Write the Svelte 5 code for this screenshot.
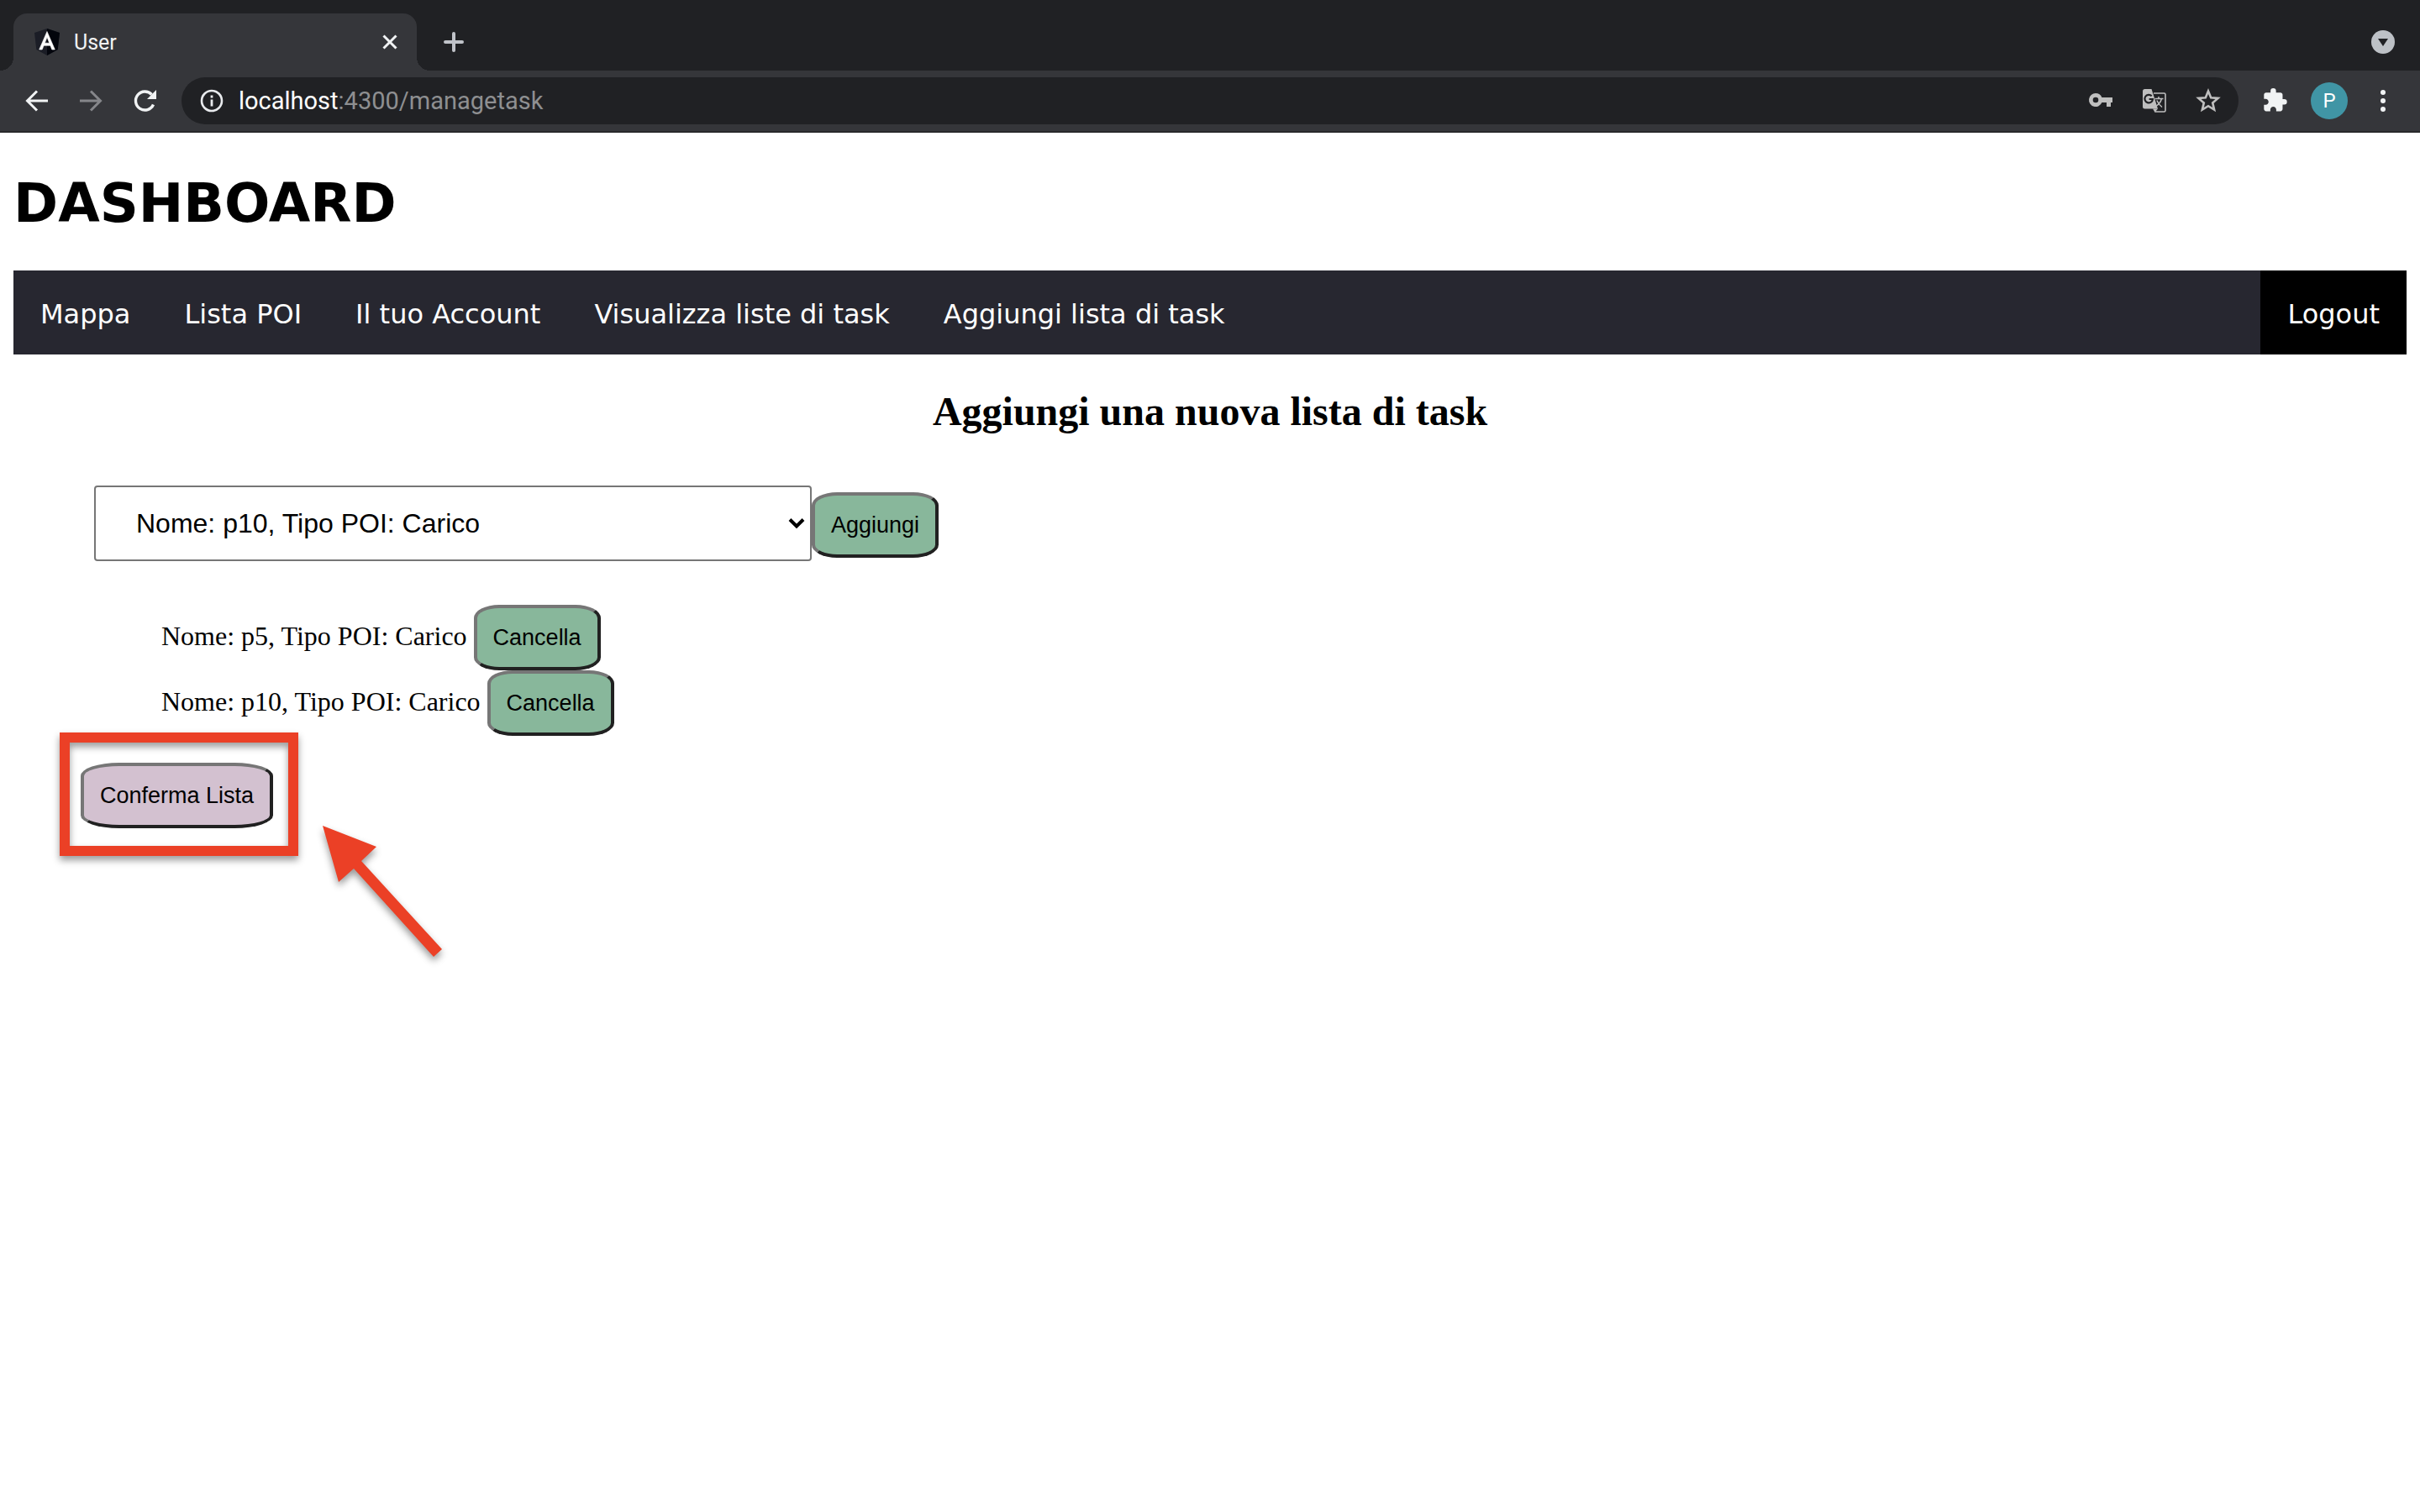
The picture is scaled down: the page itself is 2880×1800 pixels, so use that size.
<script>
  const links = ['Mappa', 'Lista POI', 'Il tuo Account', 'Visualizza liste di task', 'Aggiungi lista di task'];
  const options = ['Nome: p10, Tipo POI: Carico', 'Nome: p5, Tipo POI: Carico'];
  let selected = $state(options[0]);
  let tasks = $state(['Nome: p5, Tipo POI: Carico', 'Nome: p10, Tipo POI: Carico']);

  function add() {
    tasks.push(selected);
  }

  function remove(index) {
    tasks.splice(index, 1);
  }
</script>

<div class="window">
<div class="browser">
  <div class="tabstrip">
    <div class="tab">
      <svg class="favicon" viewBox="0 0 32 32" aria-hidden="true">
        <path d="M16 0 31 5 28.700 25 16 32 3.300 25 1 5Z" fill="#1b1d26" />
        <path d="M16 0 31 5 28.700 25 16 32Z" fill="#03050c" />
        <path d="M16 3.500 6.700 25H10.200L12.100 20.200H19.900L21.800 25H25.300ZM16 10.300 18.700 17.200H13.300Z" fill="#fff" fill-rule="evenodd" stroke="#fff" stroke-width="0.600" />
      </svg>
      <span class="tab-title">User</span>
      <button class="icon-button" aria-label="Chiudi scheda">
        <svg width="18" height="18" viewBox="0 0 18 18"><path d="M1.500 1.500 16.500 16.500M16.500 1.500 1.500 16.500" stroke="#f1f3f4" stroke-width="3" /></svg>
      </button>
    </div>
    <button class="icon-button" aria-label="Nuova scheda">
      <svg width="24" height="24" viewBox="0 0 24 24"><path d="M12 2V22M2 12H22" stroke="#c0c3c9" stroke-width="4" stroke-linecap="round" /></svg>
    </button>
    <button class="icon-button tab-search" aria-label="Cerca schede">
      <svg width="28" height="28" viewBox="0 0 28 28"><circle cx="14" cy="14" r="14" fill="#bdc1c6" /><path d="M8 10H20L14 19Z" fill="#202124" /></svg>
    </button>
  </div>

  <div class="toolbar">
    <div class="history">
      <button class="icon-button" aria-label="Indietro">
        <svg width="28" height="28" viewBox="0 0 28 28"><path d="M27 14H3M14 2.500 2.500 14 14 25.500" fill="none" stroke="#f1f3f4" stroke-width="3" /></svg>
      </button>
      <button class="icon-button" aria-label="Avanti">
        <svg width="28" height="28" viewBox="0 0 28 28"><path d="M1 14H25M14 2.500 25.500 14 14 25.500" fill="none" stroke="#85868a" stroke-width="3" /></svg>
      </button>
      <button class="icon-button" aria-label="Ricarica">
        <svg width="28" height="28" viewBox="0 0 28 28"><path d="M24.500 18.500A11 11 0 1 1 22.500 6.500" fill="none" stroke="#f1f3f4" stroke-width="3.400" /><path d="M28 1V12H17Z" fill="#f1f3f4" /></svg>
      </button>
    </div>
    <div class="omnibox">
      <svg width="28" height="28" viewBox="0 0 28 28" aria-hidden="true"><circle cx="14" cy="14" r="12" fill="none" stroke="#e8eaed" stroke-width="2.600" /><path d="M14 7.500V10.500M14 12.500V20.500" stroke="#e8eaed" stroke-width="2.800" /></svg>
      <span class="url">localhost<span class="path">:4300/managetask</span></span>
      <div class="page-actions">
        <button class="icon-button" aria-label="Gestisci password">
          <svg width="30" height="30" viewBox="0 0 30 30"><path d="M9 6A8 8 0 1 0 16.400 17H22V22H27V17H29V11H16.400A8 8 0 0 0 9 6ZM9 10.700A3.300 3.300 0 1 1 9 17.300A3.300 3.300 0 1 1 9 10.700Z" fill="#bfbfbf" fill-rule="evenodd" /></svg>
        </button>
        <button class="icon-button" aria-label="Traduci questa pagina">
          <svg width="30" height="30" viewBox="0 0 30 30">
            <path d="M14 6H26.500Q28 6 28 7.500V26.500Q28 28 26.500 28H15.500" fill="none" stroke="#bfbfbf" stroke-width="1.600" />
            <path d="M3.500 1H11.500L19 24.500H3.500Q1 24.500 1 22V3.500Q1 1 3.500 1Z" fill="#bfbfbf" />
            <path d="M13 24.500H19L15.500 28.800Z" fill="#bfbfbf" />
            <path d="M11.700 9.300A4.800 4.800 0 1 0 13 13H8.600" fill="none" stroke="#202124" stroke-width="2.200" />
            <path d="M15.500 12.500H25.500M20 10V12.500M23.500 12.500Q22 18 16.800 21.500M17.800 14.500Q20 19.500 24 22.500" fill="none" stroke="#bfbfbf" stroke-width="1.500" />
          </svg>
        </button>
        <button class="icon-button" aria-label="Aggiungi ai preferiti">
          <svg width="30" height="30" viewBox="0 0 30 30"><path d="M15 3.500 18.200 11.200 26.600 11.900 20.200 17.400 22.100 25.500 15 21.200 7.900 25.500 9.800 17.400 3.400 11.900 11.800 11.200Z" fill="none" stroke="#bfbfbf" stroke-width="2.600" /></svg>
        </button>
      </div>
    </div>
    <button class="icon-button" aria-label="Estensioni">
      <svg width="30" height="30" viewBox="1 1 23 23"><path d="M20.500 11H19V7c0-1.100-.9-2-2-2h-4V3.500a2.500 2.500 0 0 0-5 0V5H4c-1.100 0-1.990.9-1.990 2v3.800H3.500c1.490 0 2.700 1.210 2.700 2.700s-1.210 2.700-2.700 2.700H2V20c0 1.100.9 2 2 2h3.800v-1.500c0-1.490 1.210-2.700 2.700-2.700s2.700 1.210 2.700 2.700V22H17c1.100 0 2-.9 2-2v-4h1.500a2.500 2.500 0 0 0 0-5z" fill="#f1f3f4" /></svg>
    </button>
    <button class="avatar" aria-label="Profilo P">P</button>
    <button class="icon-button menu" aria-label="Menu">
      <svg width="6" height="28" viewBox="0 0 6 28"><circle cx="3" cy="4" r="3" fill="#f1f3f4" /><circle cx="3" cy="14" r="3" fill="#f1f3f4" /><circle cx="3" cy="24" r="3" fill="#f1f3f4" /></svg>
    </button>
  </div>
</div>

<main>
  <h1>DASHBOARD</h1>
  <nav>
    {#each links as link}
      <a href="#top">{link}</a>
    {/each}
    <a class="logout" href="#logout">Logout</a>
  </nav>

  <h2>Aggiungi una nuova lista di task</h2>

  <div class="picker">
    <div class="select-box">
      <select aria-label="POI" bind:value={selected}>
        {#each options as option}
          <option>{option}</option>
        {/each}
      </select>
      <svg class="chevron" width="20" height="14" viewBox="0 0 20 14" aria-hidden="true"><path d="M2 2.500 10 10.500 18 2.500" fill="none" stroke="#000" stroke-width="4" /></svg>
    </div>
    <button class="action" onclick={add}>Aggiungi</button>
  </div>

  <ul>
    {#each tasks as task, i}
      <li><span>{task}</span><button class="action" onclick={() => remove(i)}>Cancella</button></li>
    {/each}
  </ul>

  <div class="confirm">
    <button class="action primary">Conferma Lista</button>
    <div class="highlight"></div>
    <svg class="arrow" width="150" height="164" viewBox="0 0 150 164" aria-hidden="true"><path d="M4 3 68 28 50 45 146 150 136 159 41 54 23 70Z" fill="#eb4026" /></svg>
  </div>
</main>
</div>

<style>
  :global(body) {
    background: #fff;
  }

  .window {
    display: flex;
    flex-direction: column;
    min-height: 100vh;
  }

  button {
    margin: 0;
    cursor: pointer;
  }

  .browser {
    font-family: Roboto, 'Liberation Sans', sans-serif;
    background: #35363a;
    border-bottom: 2px solid #28292b;
  }

  .tabstrip {
    display: flex;
    align-items: center;
    height: 84px;
    box-sizing: border-box;
    padding: 16px 30px 0 16px;
    background: #202124;
  }

  .tab {
    position: relative;
    display: flex;
    align-items: center;
    width: 480px;
    height: 68px;
    box-sizing: border-box;
    padding: 0 23px 0 24px;
    margin-right: 32px;
    border-radius: 16px 16px 0 0;
    background: #35363a;
  }

  .tab::before,
  .tab::after {
    content: '';
    position: absolute;
    bottom: 0;
    width: 16px;
    height: 16px;
  }

  .tab::before {
    right: 100%;
    background: radial-gradient(circle at 0 0, #202124 16px, #35363a 16px);
  }

  .tab::after {
    left: 100%;
    background: radial-gradient(circle at 100% 0, #202124 16px, #35363a 16px);
  }

  .favicon {
    width: 32px;
    height: 32px;
  }

  .tab-title {
    flex: 1;
    margin-left: 16px;
    font-size: 25px;
    color: #f1f3f4;
  }

  .icon-button {
    display: flex;
    padding: 0;
    border: 0;
    background: none;
  }

  .tab-search {
    margin-left: auto;
  }

  .toolbar {
    display: flex;
    align-items: center;
    height: 72px;
    box-sizing: border-box;
    padding: 0 41px 0 30px;
  }

  .history {
    display: flex;
    gap: 36px;
    margin-right: 30px;
  }

  .omnibox {
    flex: 1;
    display: flex;
    align-items: center;
    height: 56px;
    box-sizing: border-box;
    margin-right: 29px;
    padding: 0 21px 0 22px;
    border-radius: 28px;
    background: #202124;
  }

  .url {
    flex: 1;
    margin-left: 18px;
    font-size: 29px;
    color: #fff;
  }

  .path {
    color: #8e8f91;
  }

  .page-actions {
    display: flex;
    gap: 34px;
  }

  .avatar {
    width: 44px;
    height: 44px;
    margin: 0 39px 0 27px;
    padding: 0;
    border: 0;
    border-radius: 50%;
    background: #4095a5;
    color: #fff;
    font: 24px Roboto, sans-serif;
  }

  main {
    flex: 1;
    padding: 45px 16px 16px;
    font-family: 'Liberation Serif', 'Times New Roman', serif;
    color: #000;
  }

  h1 {
    margin: 0 0 41px;
    font: bold 64px/78px 'DejaVu Sans', Verdana, sans-serif;
  }

  nav {
    display: flex;
    background: #272730;
  }

  nav a {
    padding: 30px 32px 26px;
    font: 32px/44px 'DejaVu Sans', Verdana, sans-serif;
    color: #fff;
    text-decoration: none;
  }

  .logout {
    margin-left: auto;
    background: #000;
  }

  h2 {
    margin: 40px 0 60px;
    font-size: 48px;
    line-height: 56px;
    text-align: center;
  }

  .picker {
    display: flex;
    align-items: baseline;
    padding-left: 96px;
  }

  .select-box {
    position: relative;
    flex: 0 1 854px;
  }

  select {
    appearance: none;
    display: block;
    width: 100%;
    margin: 0;
    padding: 25px 48px;
    border: 2px solid #767676;
    border-radius: 4px;
    background: #fff;
    color: #000;
    font: 32px/36px 'Liberation Sans', Arial, sans-serif;
  }

  .chevron {
    position: absolute;
    right: 8px;
    top: 38px;
    pointer-events: none;
  }

  .action {
    padding: 20px 19px;
    border: 4px solid;
    border-color: #767676 #212121 #212121 #767676;
    border-radius: 20%;
    background: #88b79b;
    color: #000;
    font: 27px/30px 'Liberation Sans', Arial, sans-serif;
  }

  ul {
    margin: 52px 0 32px;
    padding: 0 0 0 176px;
    list-style: none;
  }

  li {
    display: flex;
    align-items: baseline;
    gap: 8px;
    font-size: 32px;
    line-height: 36px;
  }

  .confirm {
    position: relative;
    width: fit-content;
    margin-left: 80px;
  }

  .primary {
    background: #d3c1d0;
  }

  /* Callout drawn over the form around the confirm button */
  .highlight {
    position: absolute;
    left: -25px;
    top: -36px;
    width: 284px;
    height: 147px;
    box-sizing: border-box;
    border: 12px solid #eb4026;
    filter: drop-shadow(0 5px 4px rgba(0, 0, 0, 0.4));
    pointer-events: none;
  }

  .arrow {
    position: absolute;
    left: 284px;
    top: 72px;
    overflow: visible;
    filter: drop-shadow(0 5px 4px rgba(0, 0, 0, 0.4));
    pointer-events: none;
  }
</style>
